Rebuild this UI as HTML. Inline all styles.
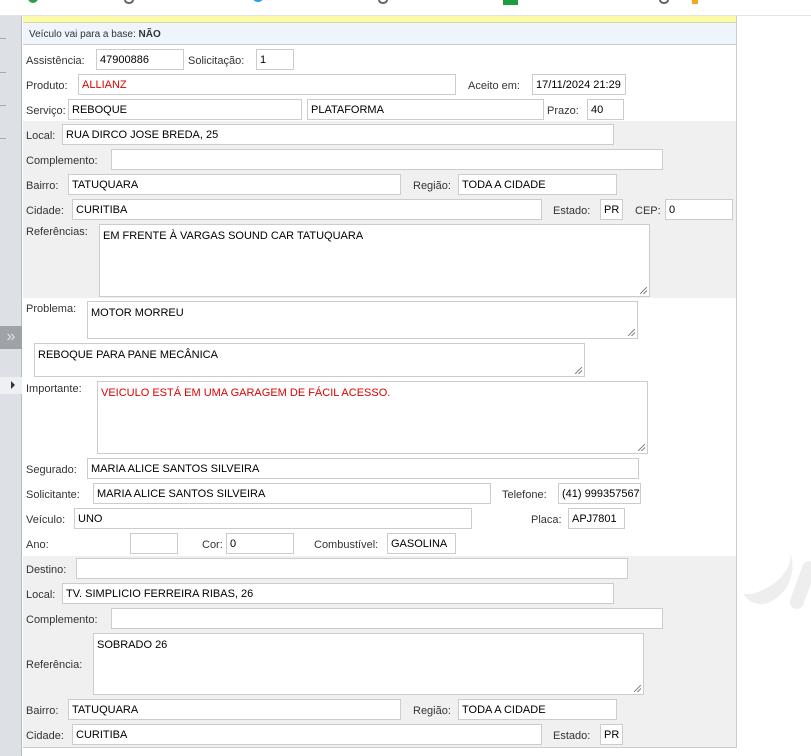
<!DOCTYPE html>
<html><head><meta charset="utf-8"><style>
*{box-sizing:border-box;margin:0;padding:0}
body{width:811px;height:756px;overflow:hidden;background:#fff;position:relative;font-family:"Liberation Sans",sans-serif;font-size:11px;color:#333}
.a{position:absolute}
.l{position:absolute;font-size:11px;color:#333;white-space:nowrap;line-height:13px;margin-top:1px}
.i{position:absolute;background:#fff;border:1px solid #ccc;height:21px;font-size:11px;color:#000;padding:4px 3px 0 3px;white-space:nowrap;overflow:hidden;line-height:13px}
.t{position:absolute;background:#fff;border:1px solid #ccc;font-size:11px;color:#000;padding:5px 3px;line-height:13px}
.t:after{content:"";position:absolute;right:2px;bottom:2px;width:7px;height:7px;background:linear-gradient(135deg,transparent 45%,#888 45%,#888 55%,transparent 55%,transparent 70%,#888 70%,#888 80%,transparent 80%)}
.r{color:#d00}
</style></head><body>
<div class="a" style="left:0;top:0;width:811px;height:16px;background:#fff;border-bottom:1px solid #e4e4e4"></div>
<div class="a" style="left:28px;top:-4px;width:10px;height:7px;background:#2a9d4a;border-radius:0 0 5px 5px"></div>
<div class="a" style="left:124px;top:-4px;width:10px;height:8px;border:2px solid #666;border-radius:50%"></div>
<div class="a" style="left:252px;top:-4px;width:12px;height:6px;background:#1da1f2;border-radius:0 0 6px 6px"></div>
<div class="a" style="left:378px;top:-4px;width:10px;height:8px;border:2px solid #666;border-radius:50%"></div>
<div class="a" style="left:503px;top:0;width:15px;height:5px;background:#1e9e3a"></div>
<div class="a" style="left:659px;top:-4px;width:10px;height:8px;border:2px solid #666;border-radius:50%"></div>
<div class="a" style="left:692px;top:0;width:6px;height:4px;background:#f5a623"></div>
<div class="a" style="left:0;top:16px;width:22px;height:740px;background:#dde0e4;border-right:1px solid #b8bcc0"></div>
<div class="a" style="left:0;top:38px;width:6px;height:1px;background:#aaa"></div>
<div class="a" style="left:0;top:72px;width:6px;height:1px;background:#aaa"></div>
<div class="a" style="left:0;top:105px;width:6px;height:1px;background:#aaa"></div>
<div class="a" style="left:0;top:138px;width:6px;height:1px;background:#aaa"></div>
<div class="a" style="left:0;top:326px;width:22px;height:23px;background:#9ea3a8;color:#e0e0e0;font-size:16px;line-height:22px;text-align:center">»</div>
<div class="a" style="left:0;top:377px;width:22px;height:17px;background:#eef0f2"></div>
<div class="a" style="left:11px;top:381px;width:0;height:0;border-left:4px solid #333;border-top:4px solid transparent;border-bottom:4px solid transparent"></div>
<div class="a" style="left:740px;top:560px;width:60px;height:40px;border-bottom:14px solid #eee;border-radius:0 0 40px 20px;transform:rotate(-25deg)"></div>
<div class="a" style="left:796px;top:560px;width:14px;height:50px;background:#eee;border-radius:8px;transform:rotate(20deg)"></div>
<div class="a" style="left:23px;top:16px;width:714px;height:732px;border-right:1px solid #ccc;border-bottom:1px solid #ccc;background:#fff"></div>
<div class="a" style="left:23px;top:16px;width:713px;height:7px;background:#fafaa8;border-bottom:1px solid #d8d8a0"></div>
<div class="a" style="left:23px;top:23px;width:713px;height:22px;background:#eef5fc;border-bottom:1px solid #ccc"></div>
<div class="l" style="left:29px;top:27px;font-size:10px">Veículo vai para a base: <b>NÃO</b></div>
<div class="a" style="left:23px;top:121px;width:713px;height:177px;background:#f0f0f0"></div>
<div class="a" style="left:23px;top:556px;width:713px;height:191px;background:#f0f0f0"></div>

<div class="l" style="left:26px;top:54px">Assistência:</div><div class="i" style="left:96px;top:49px;width:88px">47900886</div>
<div class="l" style="left:188px;top:54px">Solicitação:</div><div class="i" style="left:256px;top:49px;width:38px">1</div>
<div class="l" style="left:26px;top:79px">Produto:</div><div class="i r" style="left:78px;top:74px;width:378px">ALLIANZ</div>
<div class="l" style="left:468px;top:79px">Aceito em:</div><div class="i" style="left:532px;top:74px;width:94px">17/11/2024 21:29</div>
<div class="l" style="left:26px;top:104px">Serviço:</div><div class="i" style="left:68px;top:99px;width:234px">REBOQUE</div>
<div class="i" style="left:307px;top:99px;width:237px">PLATAFORMA</div>
<div class="l" style="left:547px;top:104px">Prazo:</div><div class="i" style="left:587px;top:99px;width:37px">40</div>

<div class="l" style="left:26px;top:129px">Local:</div><div class="i" style="left:62px;top:124px;width:552px">RUA DIRCO JOSE BREDA, 25</div>
<div class="l" style="left:26px;top:154px">Complemento:</div><div class="i" style="left:111px;top:149px;width:552px"></div>
<div class="l" style="left:26px;top:179px">Bairro:</div><div class="i" style="left:68px;top:174px;width:333px">TATUQUARA</div>
<div class="l" style="left:413px;top:179px">Região:</div><div class="i" style="left:458px;top:174px;width:159px">TODA A CIDADE</div>
<div class="l" style="left:26px;top:204px">Cidade:</div><div class="i" style="left:72px;top:199px;width:470px">CURITIBA</div>
<div class="l" style="left:553px;top:204px">Estado:</div><div class="i" style="left:600px;top:199px;width:23px">PR</div>
<div class="l" style="left:635px;top:204px">CEP:</div><div class="i" style="left:665px;top:199px;width:68px">0</div>
<div class="l" style="left:26px;top:225px">Referências:</div><div class="t" style="left:99px;top:224px;width:551px;height:73px">EM FRENTE À VARGAS SOUND CAR TATUQUARA</div>

<div class="l" style="left:26px;top:302px">Problema:</div><div class="t" style="left:87px;top:301px;width:551px;height:38px">MOTOR MORREU</div>
<div class="t" style="left:34px;top:343px;width:551px;height:34px">REBOQUE PARA PANE MECÂNICA</div>
<div class="l" style="left:26px;top:382px">Importante:</div><div class="t r" style="left:97px;top:381px;width:551px;height:73px">VEICULO ESTÁ EM UMA GARAGEM DE FÁCIL ACESSO.</div>
<div class="l" style="left:26px;top:463px">Segurado:</div><div class="i" style="left:87px;top:458px;width:552px">MARIA ALICE SANTOS SILVEIRA</div>
<div class="l" style="left:26px;top:488px">Solicitante:</div><div class="i" style="left:93px;top:483px;width:398px">MARIA ALICE SANTOS SILVEIRA</div>
<div class="l" style="left:502px;top:488px">Telefone:</div><div class="i" style="left:558px;top:483px;width:83px">(41) 999357567</div>
<div class="l" style="left:26px;top:513px">Veículo:</div><div class="i" style="left:74px;top:508px;width:398px">UNO</div>
<div class="l" style="left:531px;top:513px">Placa:</div><div class="i" style="left:568px;top:508px;width:57px">APJ7801</div>
<div class="l" style="left:26px;top:538px">Ano:</div><div class="i" style="left:130px;top:533px;width:48px"></div>
<div class="l" style="left:202px;top:538px">Cor:</div><div class="i" style="left:226px;top:533px;width:68px">0</div>
<div class="l" style="left:314px;top:538px">Combustível:</div><div class="i" style="left:387px;top:533px;width:69px">GASOLINA</div>

<div class="l" style="left:26px;top:563px">Destino:</div><div class="i" style="left:76px;top:558px;width:552px"></div>
<div class="l" style="left:26px;top:588px">Local:</div><div class="i" style="left:62px;top:583px;width:552px">TV. SIMPLICIO FERREIRA RIBAS, 26</div>
<div class="l" style="left:26px;top:613px">Complemento:</div><div class="i" style="left:111px;top:608px;width:552px"></div>
<div class="l" style="left:26px;top:658px">Referência:</div><div class="t" style="left:93px;top:633px;width:551px;height:62px">SOBRADO 26</div>
<div class="l" style="left:26px;top:704px">Bairro:</div><div class="i" style="left:68px;top:699px;width:333px">TATUQUARA</div>
<div class="l" style="left:413px;top:704px">Região:</div><div class="i" style="left:458px;top:699px;width:159px">TODA A CIDADE</div>
<div class="l" style="left:26px;top:729px">Cidade:</div><div class="i" style="left:72px;top:724px;width:470px">CURITIBA</div>
<div class="l" style="left:553px;top:729px">Estado:</div><div class="i" style="left:600px;top:724px;width:23px">PR</div>
</body></html>
